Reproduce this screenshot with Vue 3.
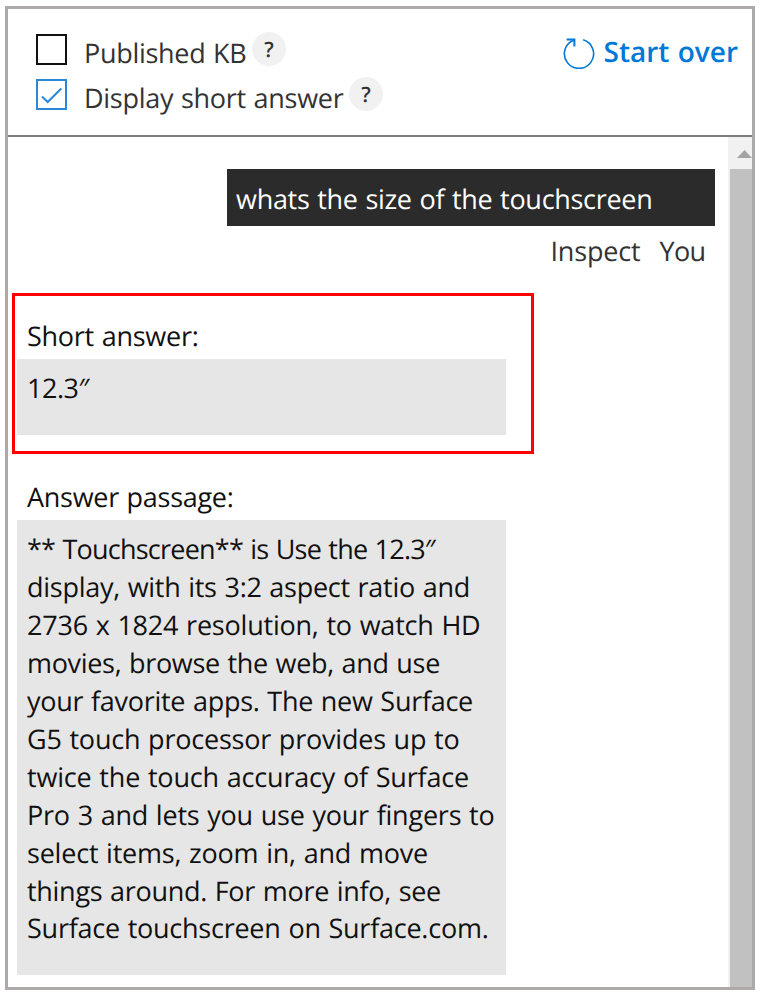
<script setup>
const question = { text: 'whats the size of the touchscreen', width: 416.5 }

const options = [
  { label: 'Published KB', width: 162.5, checked: false },
  { label: 'Display short answer', width: 259.5, checked: true },
]

const passage = [
  { text: '** Touchscreen** is Use the 12.3″', width: 408 },
  { text: 'display, with its 3:2 aspect ratio and', width: 443 },
  { text: '2736 x 1824 resolution, to watch HD', width: 453.5 },
  { text: 'movies, browse the web, and use', width: 413 },
  { text: 'your favorite apps. The new Surface', width: 446 },
  { text: 'G5 touch processor provides up to', width: 432.5 },
  { text: 'twice the touch accuracy of Surface', width: 442 },
  { text: 'Pro 3 and lets you use your fingers to', width: 467.5 },
  { text: 'select items, zoom in, and move', width: 401 },
  { text: 'things around. For more info, see', width: 414 },
  { text: 'Surface touchscreen on Surface.com.', width: 461.5 },
]

// Tracks the letters so that a line of text takes up the given width.
const vFit = {
  mounted(el, { value }) {
    const natural = el.getBoundingClientRect().width
    const spacing = (value - natural) / el.textContent.length
    el.style.letterSpacing = `${spacing.toFixed(3)}px`
  },
}
</script>

<template>
  <main class="panel">
    <header class="toolbar">
      <div class="options">
        <div v-for="option in options" :key="option.label" class="option">
          <span class="box" :class="{ checked: option.checked }">
            <svg v-if="option.checked" viewBox="0 0 31 31" class="check">
              <path d="M6 17.5 L11.7 23 L25.3 9.5" />
            </svg>
          </span>
          <span class="label"><span v-fit="option.width" class="line">{{ option.label }}</span></span>
          <span class="help">?</span>
        </div>
      </div>
      <div class="restart">
        <svg viewBox="0 0 32 32" class="restart-icon">
          <path d="M20.2 2.8 A14.6 14.6 0 1 1 11.2 3" />
          <path d="M3.6 2.6 H11.4 V9.6" class="head" />
        </svg>
        <span v-fit="134.5" class="line">Start over</span>
      </div>
    </header>

    <div class="body">
      <section class="chat">
        <div class="question"><span v-fit="question.width" class="line">{{ question.text }}</span></div>
        <div class="meta">
          <span v-fit="90" class="line">Inspect</span>
          <span v-fit="46" class="line">You</span>
        </div>

        <div class="highlight">
          <div class="title"><span v-fit="171.5" class="line">Short answer:</span></div>
          <div class="answer short"><span v-fit="62" class="line">12.3″</span></div>
        </div>

        <div class="passage">
          <div class="title"><span v-fit="206.5" class="line">Answer passage:</span></div>
          <div class="answer long">
            <div v-for="row in passage" :key="row.text" class="row">
              <span v-fit="row.width" class="line">{{ row.text }}</span>
            </div>
          </div>
        </div>
      </section>

      <aside class="scrollbar">
        <div class="up">
          <svg viewBox="0 0 15 8" class="arrow"><path d="M0 8 L7.5 0 L15 8 Z" /></svg>
        </div>
        <div class="thumb"></div>
      </aside>
    </div>
  </main>
</template>

<style>
body {
  background: #fff;
}
</style>

<style scoped>
.panel {
  box-sizing: border-box;
  width: 750px;
  height: 984px;
  margin: 6px 0 0 5px;
  border: 3px solid #aeaaaa;
  display: flex;
  flex-direction: column;
  overflow: hidden;
  font-family: "Open Sans", "Noto Sans", sans-serif;
  font-size: 27px;
  line-height: 38px;
  color: #111;
  text-rendering: geometricPrecision;
}
.line {
  display: inline-block;
  white-space: pre;
  word-spacing: 1px;
}
.toolbar {
  box-sizing: border-box;
  height: 128px;
  flex: none;
  display: flex;
  justify-content: space-between;
  padding: 22px 14px 0 28px;
  border-bottom: 2px solid #7f7d7d;
}
.options {
  display: flex;
  flex-direction: column;
}
.option {
  display: flex;
  align-items: flex-start;
  height: 45.4px;
}
.box {
  box-sizing: border-box;
  width: 31px;
  height: 31px;
  margin-top: 3px;
  border: 2px solid #111;
}
.box.checked {
  border-color: #2b88d8;
}
.check {
  display: block;
  width: 31px;
  height: 31px;
  margin: -2px;
  fill: none;
  stroke: #2b88d8;
  stroke-width: 2;
}
.label {
  margin: 3px 0 0 17px;
  color: #333;
}
.help {
  width: 34px;
  height: 34px;
  margin: 1px 0 0 5.5px;
  border-radius: 50%;
  background: #f1f1f1;
  color: #333;
  font-size: 21px;
  font-weight: 600;
  line-height: 37px;
  text-align: center;
}
.restart {
  display: flex;
  align-items: flex-start;
  gap: 8.5px;
  padding-top: 2px;
  color: #0078d7;
  font-size: 28px;
  font-weight: 600;
}
.restart-icon {
  width: 32px;
  height: 32px;
  margin-top: 4px;
  fill: none;
  stroke: #0078d7;
  stroke-width: 1.6;
}
.restart-icon .head {
  stroke-width: 2;
}
.body {
  flex: 1;
  display: flex;
  min-height: 0;
}
.chat {
  flex: 1;
  display: flex;
  flex-direction: column;
  align-items: flex-start;
  padding: 32px 13px 0 4px;
}
.question {
  box-sizing: border-box;
  align-self: flex-end;
  width: 488px;
  height: 57px;
  padding: 11px 9px;
  background: #2b2b2b;
  color: #fff;
}
.meta {
  align-self: flex-end;
  display: flex;
  gap: 19px;
  box-sizing: border-box;
  height: 43px;
  padding: 6px 9.5px 0 0;
  color: #333;
}
.highlight {
  box-sizing: border-box;
  width: 522px;
  height: 161px;
  margin-top: 24px;
  padding: 21px 0 0 2px;
  border: 3px solid #f00;
}
.title {
  height: 42px;
  padding-left: 10px;
}
.answer {
  box-sizing: border-box;
  width: 489px;
  padding: 10.4px 0 0 10px;
  background: #e6e6e6;
}
.short {
  height: 76px;
}
.passage {
  margin-top: 24px;
  padding-left: 5px;
}
.long {
  height: 455px;
}
.row {
  height: 37.92px;
}
.scrollbar {
  flex: none;
  width: 24px;
  display: flex;
  flex-direction: column;
  background: #f1f1f1;
}
.up {
  height: 32px;
  flex: none;
  padding: 13px 0 0 9px;
  box-sizing: border-box;
}
.arrow {
  display: block;
  width: 15px;
  height: 8px;
  fill: #a3a3a3;
}
.thumb {
  flex: 1;
  margin-left: 2px;
  background: #c1c1c1;
}
</style>
